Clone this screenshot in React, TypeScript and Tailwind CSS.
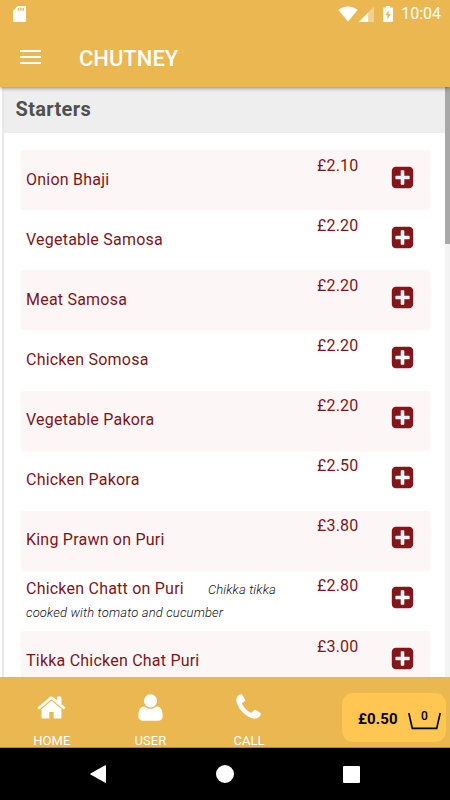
import type { ReactNode } from "react";

type Item = { name: string; price: string; note?: string };

const STARTERS: Item[] = [
  { name: "Onion Bhaji", price: "£2.10" },
  { name: "Vegetable Samosa", price: "£2.20" },
  { name: "Meat Samosa", price: "£2.20" },
  { name: "Chicken Somosa", price: "£2.20" },
  { name: "Vegetable Pakora", price: "£2.20" },
  { name: "Chicken Pakora", price: "£2.50" },
  { name: "King Prawn on Puri", price: "£3.80" },
  { name: "Chicken Chatt on Puri", price: "£2.80", note: "Chikka tikka cooked with tomato and cucumber" },
  { name: "Tikka Chicken Chat Puri", price: "£3.00" },
];

const ICONS = {
  home: "M1472 992v480q0 26-19 45t-45 19h-384v-384h-256v384h-384q-26 0-45-19t-19-45v-480q0-1 .5-3t.5-3l575-474 575 474q1 2 1 6zm223-69l-62 74q-8 9-21 11h-3q-13 0-21-7l-692-577-692 577q-12 8-24 7-13-2-21-11l-62-74q-8-10-7-23.5t11-21.5l719-599q32-26 76-26t76 26l244 204v-195q0-14 9-23t23-9h192q14 0 23 9t9 23v408l219 182q10 8 11 21.5t-7 23.5z",
  user: "M1600 1405q0 120-73 189.5t-194 69.5h-874q-121 0-194-69.5t-73-189.5q0-53 3.5-103.5t14-109 26.5-108.5 43-97.5 62-81 85.5-53.5 111.5-20q9 0 42 21.5t74.5 48 108 48 133.5 21.5 133.5-21.5 108-48 74.5-48 42-21.5q61 0 111.5 20t85.5 53.5 62 81 43 97.5 26.5 108.5 14 109 3.5 103.5zm-320-893q0 159-112.5 271.5t-271.5 112.5-271.5-112.5-112.5-271.5 112.5-271.5 271.5-112.5 271.5 112.5 112.5 271.5z",
  phone: "M1600 1240q0 27-10 70.5t-21 68.5q-21 50-122 106-94 51-186 51-27 0-52.5-3.5t-57.5-12.5-47.5-14.5-55.5-20.5-49-18q-98-35-175-83-128-79-264.5-215.5t-215.5-264.5q-48-77-83-175-3-9-18-49t-20.5-55.5-14.5-47.5-12.5-57.5-3.5-52.5q0-92 51-186 56-101 106-122 25-11 68.5-21t70.5-10q14 0 21 3 18 6 53 76 11 19 30 54t35 63.5 31 53.5q3 4 17.5 25t21.5 35.5 7 28.5q0 20-28.5 50t-62 55-62 53-28.5 46q0 9 5 22.5t8.5 20.5 14 24 11.5 19q76 137 174 235t235 174q2 1 19 11.5t24 14 20.5 8.5 22.5 5q18 0 46-28.5t53-62 55-62 50-28.5q14 0 28.5 7t35.5 21.5 25 17.5q25 15 53.5 31t63.5 35 54 30q70 35 76 53 3 7 3 21z",
  plus: "M1408 960v-128q0-26-19-45t-45-19h-320v-320q0-26-19-45t-45-19h-128q-26 0-45 19t-19 45v320h-320q-26 0-45 19t-19 45v128q0 26 19 45t45 19h320v320q0 26 19 45t45 19h128q26 0 45-19t19-45v-320h320q26 0 45-19t19-45zm256-544v960q0 119-84.5 203.5t-203.5 84.5h-960q-119 0-203.5-84.5t-84.5-203.5v-960q0-119 84.5-203.5t203.5-84.5h960q119 0 203.5 84.5t84.5 203.5z",
};

function Icon({ name, className = "" }: { name: keyof typeof ICONS; className?: string }) {
  return (
    <svg viewBox="0 0 1792 1792" fill="currentColor" className={className}>
      <path d={ICONS[name]} />
    </svg>
  );
}

function StatusBar() {
  return (
    <div className="flex h-7 items-center pl-[13px] pr-[9px]">
      <svg viewBox="0 0 13 16" className="h-4 w-[13px]" fill="currentColor">
        <path
          fillRule="evenodd"
          d="M4.6 0H12q1 0 1 1v14q0 1-1 1H1q-1 0-1-1V4.9zM4.8 2v2.8h1.4V2zM7.2 2v2.8h1.4V2zM9.6 2v2.8H11V2z"
        />
      </svg>
      <svg viewBox="0 0 20 16" className="ml-auto h-4 w-5" fill="currentColor">
        <path d="M.4 4Q4.6 .4 10 .4T19.6 4L10 15.6z" />
      </svg>
      <svg viewBox="0 0 15 16" className="ml-px h-4 w-[15px]" fill="currentColor">
        <path opacity=".35" d="M15 .5V16H0z" />
        <path d="M9.2 6.5V16H0z" />
      </svg>
      <svg viewBox="0 0 10 16" className="ml-[9px] h-4 w-[10px]" fill="currentColor">
        <path
          fillRule="evenodd"
          d="M3 0h4v1.5h2q1 0 1 1V15q0 1-1 1H1q-1 0-1-1V2.5q0-1 1-1h2zM5.7 4L2.5 9.2h1.9V13.5L7.6 8H5.7z"
        />
      </svg>
      <span className="ml-2 text-base leading-7">10:04</span>
    </div>
  );
}

function MenuRow({ item }: { item: Item }) {
  return (
    <li className="flex h-[60.15px] shrink-0 text-[#7d1518] odd:bg-[#fcf6f6]">
      <div className="flex w-[296px] items-center pb-[2px] pl-[5px] pr-6">
        <p className="text-base leading-[23px] tracking-[0.22px]">
          {item.name}
          {item.note && (
            <span className="ml-6 text-[13px] font-light italic leading-none tracking-[0.15px] text-[#111]">
              {item.note}
            </span>
          )}
        </p>
      </div>
      <span className="w-[73px] pt-[3.5px] text-base leading-6 tracking-[0.2px]">{item.price}</span>
      <button type="button" className="mt-[14.5px] size-[25px] text-[#821619]">
        <Icon name="plus" className="size-[25px]" />
      </button>
    </li>
  );
}

function Tab({ label, children }: { label: string; children: ReactNode }) {
  return (
    <a className="flex w-[98.6px] flex-col items-center pt-[15px]">
      {children}
      <span className="mt-[9px] shrink-0 text-[13px] leading-[18px]">{label}</span>
    </a>
  );
}

export default function App() {
  return (
    <div className="flex h-[800px] w-[450px] flex-col overflow-hidden bg-white font-['Roboto',sans-serif]">
      <header className="relative z-10 h-[87px] shrink-0 bg-[#ebb750] text-white shadow-[0_1px_4px_rgba(0,0,0,0.45)]">
        <StatusBar />
        <div className="flex h-[57px] items-center pl-5">
          <div className="flex w-[59px] flex-col gap-[4px]">
            <span className="h-[2px] w-[21px] bg-white" />
            <span className="h-[2px] w-[21px] bg-white" />
            <span className="h-[2px] w-[21px] bg-white" />
          </div>
          <h1 className="mt-1 text-[22px] font-medium leading-7">CHUTNEY</h1>
        </div>
      </header>

      <main className="flex h-[590px] shrink-0 overflow-hidden">
        <section className="ml-[2px] flex w-[443px] flex-col border-l-2 border-[#e8e8e8]">
          <h2 className="h-[46px] shrink-0 bg-[#eeeeee] pl-[11.5px] text-[20px] font-bold leading-[44px] tracking-[0.35px] text-[#505050]">
            Starters
          </h2>
          <ul className="ml-[17px] mt-[17px] flex w-[409px] flex-col">
            {STARTERS.map((item) => (
              <MenuRow key={item.name} item={item} />
            ))}
          </ul>
        </section>
        <div className="w-[5px] bg-[#f3f3f3]">
          <div className="h-[157px] bg-[#a8a8a8]" />
        </div>
      </main>

      <footer className="flex h-[71px] shrink-0 border-b border-[#bd8422] bg-[#ebb750] pl-[2.5px] text-white">
        <Tab label="HOME">
          <Icon name="home" className="size-[31px] shrink-0" />
        </Tab>
        <Tab label="USER">
          <Icon name="user" className="size-[31px] shrink-0" />
        </Tab>
        <Tab label="CALL">
          <Icon name="phone" className="size-[31px] shrink-0" />
        </Tab>
        <button
          type="button"
          className="ml-auto mr-[4px] mt-4 flex h-[49px] w-[104px] items-center rounded-[11px] bg-[#ffc651] pl-4 text-black"
        >
          <span className="w-[50px] pt-1 text-left text-[15px] font-bold tracking-[0.1px]">£0.50</span>
          <span className="relative mt-1.5 block h-[18px] w-[33px]">
            <svg viewBox="0 0 33 18" className="h-[18px] w-[33px]" fill="none" stroke="currentColor">
              <path strokeWidth="1.7" d="M.8 1L4.3 16.4H28.7L32.2 1" />
            </svg>
            <span className="absolute inset-x-0 -top-[4px] text-center text-[12px] font-medium leading-4">0</span>
          </span>
        </button>
      </footer>

      <nav className="flex h-[52px] shrink-0 items-center bg-black pl-[90px] text-white">
        <svg viewBox="0 0 16 18" className="h-[18px] w-4" fill="currentColor">
          <path d="M16 .8v16.4q0 .8-.8.5L.5 9.5Q0 9 .5 8.5L15.2.3q.8-.3.8.5z" />
        </svg>
        <span className="ml-[110px] size-[18px] rounded-full bg-white" />
        <span className="ml-[109px] size-[17px] rounded-[1px] bg-white" />
      </nav>
    </div>
  );
}
